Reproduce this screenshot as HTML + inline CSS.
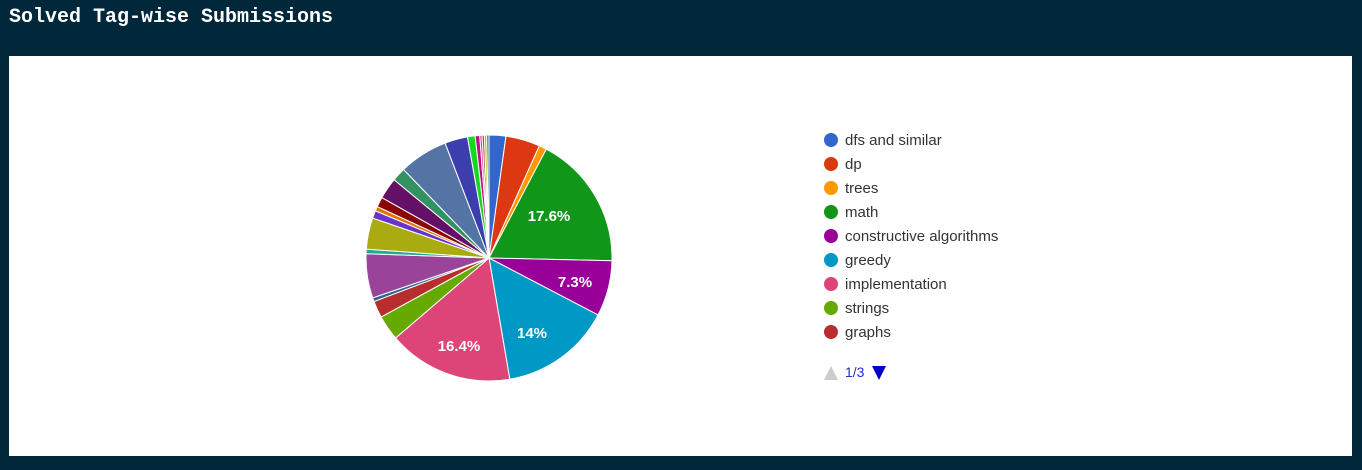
<!DOCTYPE html>
<html><head><meta charset="utf-8">
<style>
html,body{margin:0;padding:0;}
body{width:1362px;height:470px;background:#00283a;position:relative;overflow:hidden;font-family:"Liberation Sans",Arial,sans-serif;}
.title{position:absolute;left:9px;top:5px;font-family:"Liberation Mono",monospace;font-weight:bold;font-size:20px;color:#fff;line-height:26px;}
.panel{position:absolute;left:9px;top:56px;width:1343px;height:400px;background:#fff;}
svg{position:absolute;left:0;top:0;}
</style></head><body>
<div class="title">Solved Tag-wise Submissions</div>
<div class="panel"></div>
<svg width="1362" height="470" id="s" xmlns="http://www.w3.org/2000/svg">
<g id="pie"></g>
<g font-size="15" font-weight="bold" fill="#fff" text-anchor="middle">
<text x="549" y="221">17.6%</text>
<text x="575" y="287">7.3%</text>
<text x="532" y="338">14%</text>
<text x="459" y="351">16.4%</text>
</g>
<g font-size="15" fill="#333">
<circle cx="831" cy="140" r="7" fill="#3366cc"/><text x="845" y="145">dfs and similar</text>
<circle cx="831" cy="164" r="7" fill="#dc3912"/><text x="845" y="169">dp</text>
<circle cx="831" cy="188" r="7" fill="#ff9900"/><text x="845" y="193">trees</text>
<circle cx="831" cy="212" r="7" fill="#109618"/><text x="845" y="217">math</text>
<circle cx="831" cy="236" r="7" fill="#990099"/><text x="845" y="241">constructive algorithms</text>
<circle cx="831" cy="260" r="7" fill="#0099c6"/><text x="845" y="265">greedy</text>
<circle cx="831" cy="284" r="7" fill="#dd4477"/><text x="845" y="289">implementation</text>
<circle cx="831" cy="308" r="7" fill="#66aa00"/><text x="845" y="313">strings</text>
<circle cx="831" cy="332" r="7" fill="#b82e2e"/><text x="845" y="337">graphs</text>
</g>
<path d="M824 380 L838 380 L831 366 Z" fill="#ccc"/>
<text x="845" y="377" font-size="14" fill="#2233cc">1/3</text>
<path d="M872 366 L886 366 L879 380 Z" fill="#0000cc"/>
</svg>
<script>
var d=[[2.2,"#3366cc"],[4.5,"#dc3912"],[1,"#ff9900"],[17.6,"#109618"],[7.3,"#990099"],[14.6,"#0099c6"],[16.4,"#dd4477"],[3.3,"#66aa00"],[2.2,"#b82e2e"],[0.5,"#316395"],[5.8,"#994499"],[0.6,"#22aa99"],[4.1,"#aaaa11"],[1,"#6633cc"],[0.6,"#e67300"],[1.3,"#8b0707"],[2.8,"#651067"],[1.8,"#329262"],[6.4,"#5574a6"],[3,"#3b3eac"],[1,"#16d620"],[0.6,"#b91383"],[0.3,"#f4359e"],[0.3,"#9c5935"],[0.3,"#a9c413"],[0.3,"#2a778d"]];
var tot=0;d.forEach(function(x){tot+=x[0];});
var cx=489,cy=258,r=123,a=0,g=document.getElementById("pie"),h="";
d.forEach(function(x){var a2=a+x[0]/tot*2*Math.PI;
var x1=cx+r*Math.sin(a),y1=cy-r*Math.cos(a),x2=cx+r*Math.sin(a2),y2=cy-r*Math.cos(a2);
h+='<path d="M'+cx+' '+cy+' L'+x1.toFixed(2)+' '+y1.toFixed(2)+' A'+r+' '+r+' 0 '+((a2-a)>Math.PI?1:0)+' 1 '+x2.toFixed(2)+' '+y2.toFixed(2)+' Z" fill="'+x[1]+'" stroke="#fff" stroke-width="1"/>';a=a2;});
g.innerHTML=h;
</script>
</body></html>
